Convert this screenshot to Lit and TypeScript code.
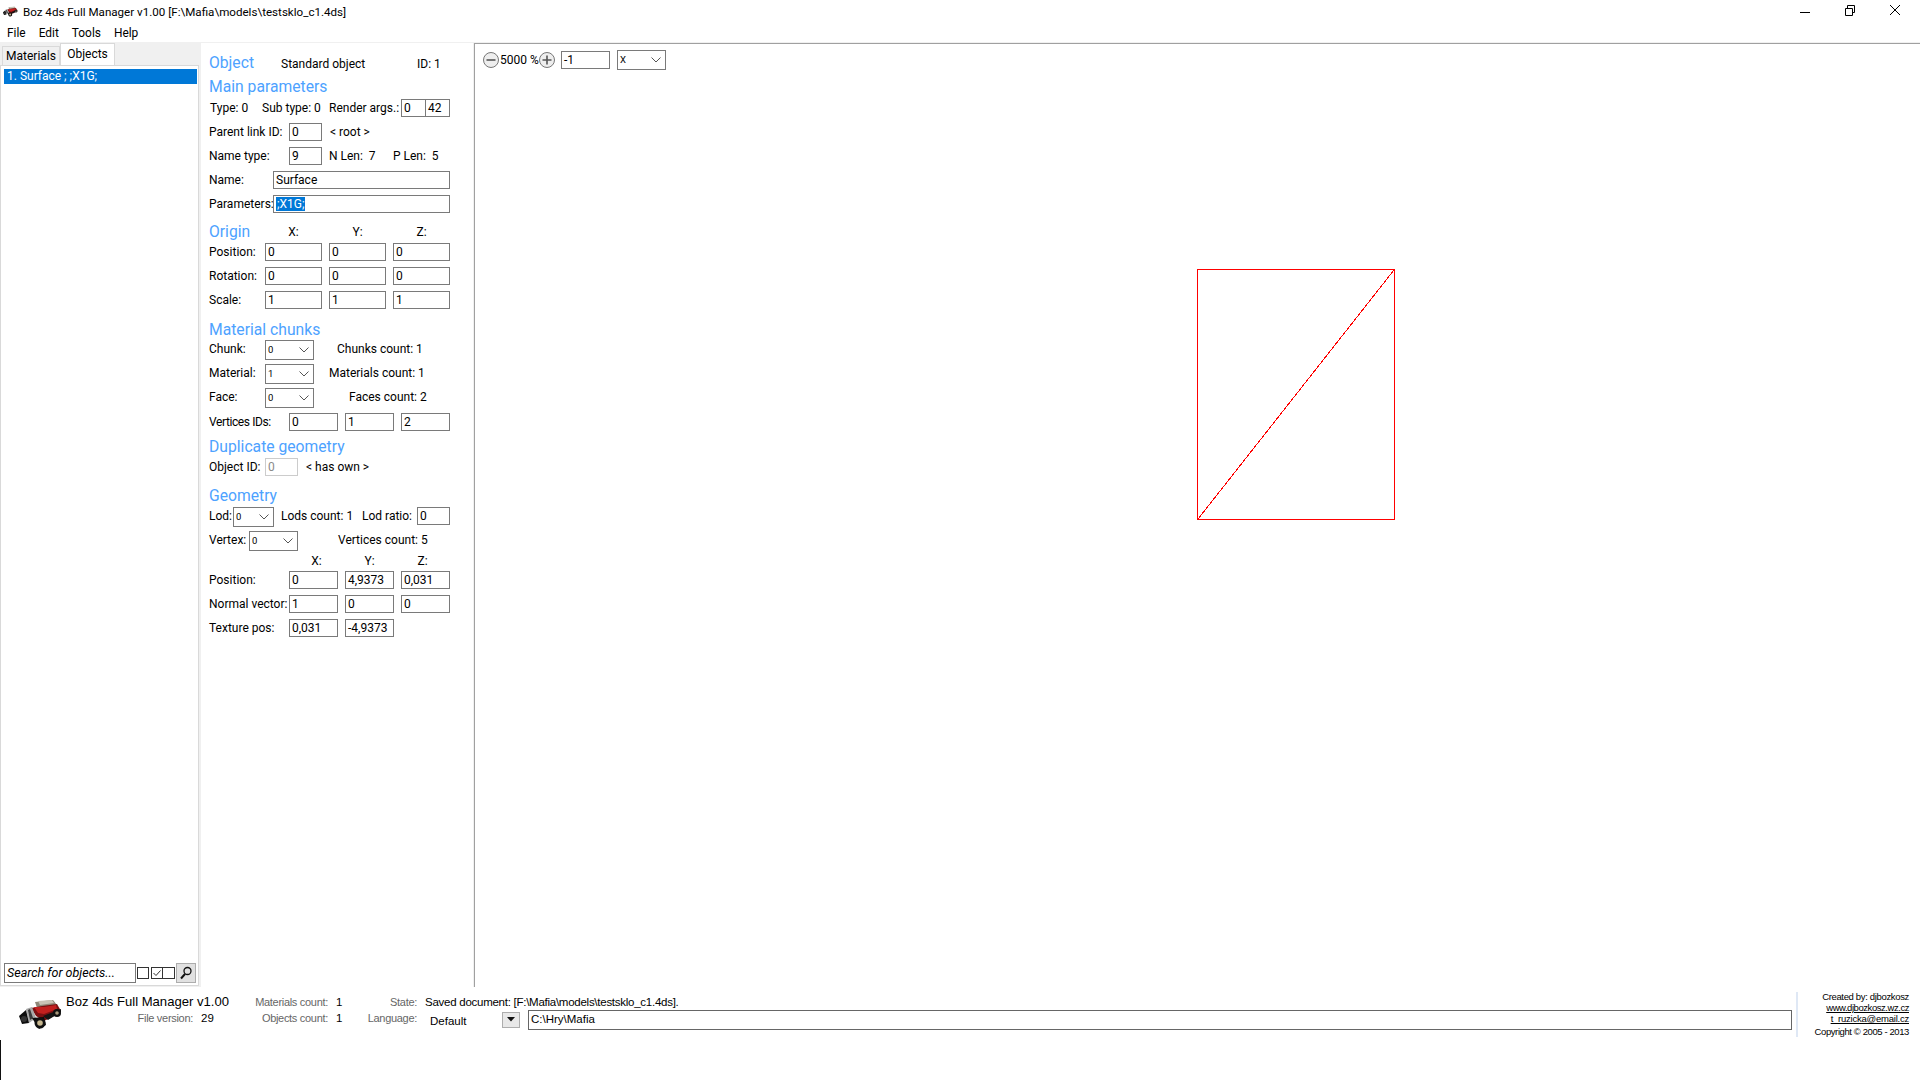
import { LitElement, html, css, svg } from "lit";
import { customElement } from "lit/decorators.js";

const car = svg`
  <path d="M21 10 L39 8 L43 13 L30 17 L23 16 Z" fill="#8f8778"/>
  <path d="M24 9 L38 8 L40 11 L26 13 Z" fill="#c9c3b6"/>
  <path d="M17 16 L28 14 L43 12 L47 19 L40 24 L30 29 L22 24 Z" fill="#7d1012"/>
  <path d="M20 15 L30 15 L42 13 L43 17 L30 22 L24 21 Z" fill="#c2201f"/>
  <path d="M29 24 L47 17 L47 20 L34 28 Z" fill="#151515"/>
  <path d="M12 17 L18 15 L22 26 L15 31 Z" fill="#a8a8a8"/>
  <path d="M14 18 L16 17 L19 26 L16 28 Z" fill="#3a3a3a"/>
  <path d="M5 24 L12 18 L15 31 L8 32 Z" fill="#0c0c0c"/>
  <path d="M18 26 L30 25 L32 33 L25 37 Z" fill="#0c0c0c"/>
  <circle cx="26" cy="31" r="5.5" fill="#111"/><circle cx="26" cy="31" r="2.8" fill="#c8b890"/>
  <circle cx="10" cy="27" r="3" fill="#333"/>
  <circle cx="43" cy="21" r="4" fill="#111"/><circle cx="43" cy="21" r="1.8" fill="#a89a7c"/>
`;

@customElement("app-root")
export class AppRoot extends LitElement {
  static styles = css`
    :host { display: block; width: 1920px; height: 1080px; background: #fff; color: #000; overflow: hidden;
      font-family: Roboto, "Liberation Sans", sans-serif; font-size: 12px; line-height: 16px; }
    * { box-sizing: border-box; }
    .title { height: 22px; display: flex; align-items: center; padding: 1px 0 0 3px; }
    .title .app { width: 15px; height: 11px; margin-right: 5px; }
    .title .text { flex: 1; font-size: 11.6px; }
    .wc { width: 16px; height: 16px; display: block; }
    .wins { display: flex; gap: 29px; margin: -3px 17px 0 0; }
    .menu { height: 20px; display: flex; align-items: center; padding: 1px 0 0 7px; gap: 13px; font-size: 11.9px; }
    .main { height: 945px; display: flex; border-top: 1px solid #f0f0f0; }
    .side { width: 201px; background: #f0f0f0; display: flex; flex-direction: column; padding-right: 2px; }
    .tabs { height: 22px; display: flex; align-items: flex-end; padding-left: 2px; flex: none; }
    .tab { border: 1px solid #d9d9d9; border-bottom: none; display: flex; align-items: center; justify-content: center; }
    .tab.off { width: 58px; height: 19px; }
    .tab.on { width: 55px; height: 22px; background: #fff; padding-bottom: 2px; }
    .listbox { height: 921px; background: #fff; border: 1px solid #d9d9d9; padding: 3px 1px 1px 3px; display: flex; flex-direction: column; }
    .sel { height: 15px; background: #0078d7; color: #fff; padding-left: 3px; line-height: 15px; }
    .bar { margin-top: auto; margin-bottom: 1px; height: 20px; display: flex; align-items: center; }
    .sbox { width: 132px; height: 20px; border: 1px solid #7a7a7a; font-style: italic; padding-left: 2px; line-height: 18px; font-size: 12.5px; }
    .chk { width: 12px; height: 12px; border: 1px solid #333; margin-left: 1px; }
    .chk.tick { margin-left: 2px; }
    .chk.tick svg { display: block; }
    .chk.last { margin-left: 0; border-left: none; }
    .go { width: 20px; height: 20px; background: #e1e1e1; border: 1px solid #adadad; margin-left: 1px; }
    .go svg { display: block; }

    .form { width: 272px; padding: 5px 0 0 8px; background: #fff; flex: none; }
    .row { display: flex; align-items: center; height: 24px; white-space: nowrap; }
    .h18 { height: 18px; } .h30 { height: 30px; } .h22 { height: 22px; } .h23 { height: 23px; } .h26 { height: 26px; } .h15 { height: 15px; }
    .pt6 { padding-top: 6px; } .pt8 { padding-top: 8px; } .pt10 { padding-top: 10px; }
    .head { color: #4da2ff; font-size: 15.7px; line-height: 20px; }
    .tb { height: 18px; border: 1px solid #7a7a7a; padding-left: 2px; line-height: 16px; flex: none; background: #fff; }
    .tb.dis { border-color: #ccc; color: #8a8a8a; }
    .w25 { width: 25px; } .w33 { width: 33px; } .w49 { width: 49px; } .w53 { width: 53px; } .w57 { width: 57px; } .w177 { width: 177px; }
    .gap7 { margin-left: 7px; } .gap8 { margin-left: 8px; } .gap-1 { margin-left: -1px; }
    .dd { height: 20px; border: 1px solid #7a7a7a; font-size: 9.5px; padding-left: 2px; line-height: 18px; display: flex; justify-content: space-between; align-items: center; flex: none; background: #fff; }
    .dd svg { margin-right: 4px; display: block; }
    .d41 { width: 41px; } .d49 { width: 49px; }
    .l24 { width: 24px; } .l40 { width: 40px; } .l56 { width: 56px; } .l64 { width: 64px; } .l80 { width: 80px; }
    .l72 { width: 72px; } .l67 { width: 67px; }
    .type { width: 53px; padding-left: 1px; }
    .std { width: 136px; }
    .down { margin-top: 2px; }
    .up { margin-top: -2px; }
    .i1 { margin-left: 23px; } .i2 { margin-left: 15px; } .i3 { margin-left: 35px; }
    .lods { margin-left: 7px; width: 81px; } .ratio { width: 55px; } .vcount { margin-left: 40px; }
    .tight { letter-spacing: -0.4px; }
    .geox { margin-left: 1px; }
    .lab { flex: none; }
    .hl { background: #0078d7; color: #fff; padding-left: 1px; display: inline-block; height: 14px; line-height: 14px; }
    .ctr { text-align: center; flex: none; }
    .sep { width: 2px; background: #a0a0a0; flex: none; border-left: 1px solid #f0f0f0; }

    .canvas { flex: 1; position: relative; border-top: 1px solid #a0a0a0; }
    .tools { height: 26px; margin-top: 3px; display: flex; align-items: center; padding-left: 7px; }
    .tools svg { display: block; flex: none; }
    .tools .pct { width: 38px; white-space: nowrap; }
    .tools .tb { margin-left: 5px; width: 49px; }
    .tools .dd { margin-left: 7px; }
    .draw { position: absolute; left: 0; top: 0; }

    .foot { height: 53px; display: flex; font-family: "Liberation Sans", sans-serif; font-size: 11.5px; }
    .gridf { flex: 1; display: grid; padding: 7px 0 0 18px; grid-template-columns: 48px 127px 50px 85px 20px 69px 1fr; grid-template-rows: 16px 16px; align-items: center; }
    .carc { grid-row: 1 / 3; align-self: start; margin: -2px 0 0 -4px; display: block; }
    .brand { grid-column: 2 / 4; font-size: 13.1px; }
    .gl { color: #666; text-align: right; font-size: 11px; letter-spacing: -0.3px; white-space: nowrap; }
    .v { padding-left: 8px; white-space: nowrap; }
    .saved { letter-spacing: -0.26px; }
    .lang { display: flex; align-items: center; padding-left: 13px; margin-top: 3px; }
    .lang .def { width: 72px; padding-top: 3px; }
    .lang .btn { width: 18px; height: 16px; background: #e8e8e8; border: 1px solid #adadad; display: flex; align-items: center; justify-content: center; }
    .lang .path { flex: 1; height: 20px; border: 1px solid #666; margin-left: 8px; padding-left: 2px; line-height: 17px; }
    .divv { width: 2px; height: 45px; margin: 5px 0 0 4px; background: #dfe8f5; flex: none; }
    .cred { width: 122px; padding: 4px 11px 0 0; text-align: right; font-size: 9.5px; }
    .cred div { white-space: nowrap; }
    .c1 { height: 12px; line-height: 12px; letter-spacing: -0.34px; }
    .c2 { height: 9px; line-height: 9px; letter-spacing: -0.45px; text-decoration: underline; }
    .c3 { height: 14px; line-height: 14px; letter-spacing: -0.23px; text-decoration: underline; }
    .c4 { height: 12px; line-height: 12px; letter-spacing: -0.4px; }
    .rest { height: 40px; }
    .caret { width: 1px; height: 40px; background: #111; }
  `;

  render() {
    return html`
      <div class="title">
        <svg class="app" viewBox="5 7 44 30">${car}</svg>
        <span class="text">Boz 4ds Full Manager v1.00 [F:\\Mafia\\models\\testsklo_c1.4ds]</span>
        <div class="wins">
          <svg class="wc" viewBox="0 0 16 16"><path d="M3 10.5H13" stroke="#000" fill="none"/></svg>
          <svg class="wc" viewBox="0 0 16 16"><path d="M3.5 6.5H10.5V13.5H3.5ZM5.5 6.5V3.5H12.5V10.5H10.5" stroke="#000" fill="none"/></svg>
          <svg class="wc" viewBox="0 0 16 16"><path d="M3 3L13 13M13 3L3 13" stroke="#000" fill="none"/></svg>
        </div>
      </div>
      <div class="menu"><span>File</span><span>Edit</span><span>Tools</span><span>Help</span></div>
      <div class="main">
        <div class="side">
          <div class="tabs"><div class="tab off">Materials</div><div class="tab on">Objects</div></div>
          <div class="listbox">
            <div class="sel">1. Surface ; ;X1G;</div>
            <div class="bar">
              <div class="sbox">Search for objects...</div>
              <div class="chk"></div>
              <div class="chk tick"><svg width="10" height="10" viewBox="0 0 10 10"><path d="M1.5 5L4 7.5L8.5 2.5" stroke="#333" fill="none"/></svg></div>
              <div class="chk last"></div>
              <div class="go"><svg width="18" height="18" viewBox="0 0 18 18"><circle cx="10.5" cy="7" r="3.5" stroke="#111" stroke-width="1.3" fill="none"/><path d="M8 10L4 14.5" stroke="#111" stroke-width="2"/></svg></div>
            </div>
          </div>
        </div>
        <div class="form">
          <div class="row h30"><span class="head lab l72">Object</span><span class="lab std down">Standard object</span><span class="lab down">ID: 1</span></div>
          <div class="row h18"><span class="head">Main parameters</span></div>
          ${this.r1()}
        </div>
        <div class="sep"></div>
        <div class="canvas">
          <div class="tools">
            ${this.circ(false)}<span class="pct">5000 %</span>${this.circ(true)}
            <div class="tb">-1</div>
            <div class="dd d49"><span>X</span>${this.chev()}</div>
          </div>
          <svg class="draw" width="1445" height="600" shape-rendering="crispEdges">
            <path d="M722.5 225.5H919.5V475.5H722.5ZM919 226L723 475" fill="none" stroke="#f00" stroke-width="1"/>
          </svg>
        </div>
      </div>
      <div class="foot">
        <div class="gridf">
          <svg class="carc" width="52" height="40" viewBox="0 0 52 40">${car}</svg>
          <div class="brand">Boz 4ds Full Manager v1.00</div>
          <div class="gl">Materials count:</div><div class="v">1</div>
          <div class="gl">State:</div><div class="v saved">Saved document: [F:\\Mafia\\models\\testsklo_c1.4ds].</div>
          <div class="gl">File version:</div><div class="v">29</div>
          <div class="gl">Objects count:</div><div class="v">1</div>
          <div class="gl">Language:</div>
          <div class="lang"><span class="def">Default</span>
            <div class="btn"><svg width="8" height="5" viewBox="0 0 8 5"><path d="M0 0H8L4 4.5Z" fill="#111"/></svg></div>
            <div class="path">C:\\Hry\\Mafia</div>
          </div>
        </div>
        <div class="divv"></div>
        <div class="cred"><div class="c1">Created by: djbozkosz</div><div class="c2">www.djbozkosz.wz.cz</div><div class="c3">t_ruzicka@email.cz</div><div class="c4">Copyright © 2005 - 2013</div></div>
      </div>
      <div class="rest"><div class="caret"></div></div>
    `;
  }

  chev() {
    return html`<svg width="10" height="6" viewBox="0 0 10 6"><path d="M0.5 0.5L5 5L9.5 0.5" stroke="#555" fill="none"/></svg>`;
  }
  circ(plus: boolean) {
    return html`<svg width="18" height="18" viewBox="0 0 18 18"><circle cx="9" cy="9" r="7.5" fill="#eee" stroke="#777"/><path d="${plus ? "M4.5 9H13.5M9 4.5V13.5" : "M4.5 9H13.5"}" stroke="#555" stroke-width="1.6"/></svg>`;
  }
  tb(v: string, w: string, cls = "") {
    return html`<div class="tb ${w} ${cls}">${v}</div>`;
  }
  dd(v: string, w: string) {
    return html`<div class="dd ${w}"><span>${v}</span>${this.chev()}</div>`;
  }
  xyz(label: string, a: string, b: string, c: string) {
    return html`<div class="row"><span class="lab l56">${label}</span>${this.tb(a, "w57")}${this.tb(b, "w57 gap7")}${this.tb(c, "w57 gap7")}</div>`;
  }
  v3(label: string, a: string, b: string, c?: string) {
    return html`<div class="row"><span class="lab l80">${label}</span>${this.tb(a, "w49")}${this.tb(b, "w49 gap7")}${c === undefined ? "" : this.tb(c, "w49 gap7")}</div>`;
  }
  chunk(label: string, v: string, info: string, cls: string) {
    return html`<div class="row"><span class="lab l56 up">${label}</span>${this.dd(v, "d49")}<span class="lab up ${cls}">${info}</span></div>`;
  }
  r1() {
    return html`
      <div class="row"><span class="lab type">Type: 0</span><span class="lab l67">Sub type: 0</span><span class="lab l72">Render args.:</span>${this.tb("0", "w25")}${this.tb("42", "w25 gap-1")}</div>
      <div class="row"><span class="lab l80">Parent link ID:</span>${this.tb("0", "w33")}<span class="lab gap8">&lt; root &gt;</span></div>
      <div class="row"><span class="lab l80">Name type:</span>${this.tb("9", "w33")}<span class="lab gap7 l64">N Len:&nbsp; 7</span><span class="lab">P Len:&nbsp; 5</span></div>
      <div class="row"><span class="lab l64">Name:</span>${this.tb("Surface", "w177")}</div>
      <div class="row"><span class="lab l64">Parameters:</span><div class="tb w177"><span class="hl">;X1G;</span></div></div>
      <div class="row pt8"><span class="head lab l56">Origin</span><span class="ctr w57">X:</span><span class="ctr w57 gap7">Y:</span><span class="ctr w57 gap7">Z:</span></div>
      ${this.xyz("Position:", "0", "0", "0")}
      ${this.xyz("Rotation:", "0", "0", "0")}
      ${this.xyz("Scale:", "1", "1", "1")}
      <div class="row h26 pt10"><span class="head">Material chunks</span></div>
      ${this.chunk("Chunk:", "0", "Chunks count: 1", "i1")}
      ${this.chunk("Material:", "1", "Materials count: 1", "i2")}
      ${this.chunk("Face:", "0", "Faces count: 2", "i3")}
      <div class="row h23"><span class="lab l80 tight">Vertices IDs:</span>${this.tb("0", "w49")}${this.tb("1", "w49 gap7")}${this.tb("2", "w49 gap7")}</div>
      <div class="row h22 pt6"><span class="head">Duplicate geometry</span></div>
      <div class="row"><span class="lab l56">Object ID:</span>${this.tb("0", "w33", "dis")}<span class="lab gap8">&lt; has own &gt;</span></div>
      <div class="row h26 pt8"><span class="head">Geometry</span></div>
      <div class="row"><span class="lab l24 up">Lod:</span>${this.dd("0", "d41")}<span class="lab lods up">Lods count: 1</span><span class="lab ratio up">Lod ratio:</span>${this.tb("0", "w33", "up")}</div>
      <div class="row"><span class="lab l40 up">Vertex:</span>${this.dd("0", "d49")}<span class="lab vcount up">Vertices count: 5</span></div>
      <div class="row h15"><span class="lab l80"></span><span class="ctr w53 geox">X:</span><span class="ctr w53">Y:</span><span class="ctr w53">Z:</span></div>
      ${this.v3("Position:", "0", "4,9373", "0,031")}
      ${this.v3("Normal vector:", "1", "0", "0")}
      ${this.v3("Texture pos:", "0,031", "-4,9373")}
    `;
  }
}
